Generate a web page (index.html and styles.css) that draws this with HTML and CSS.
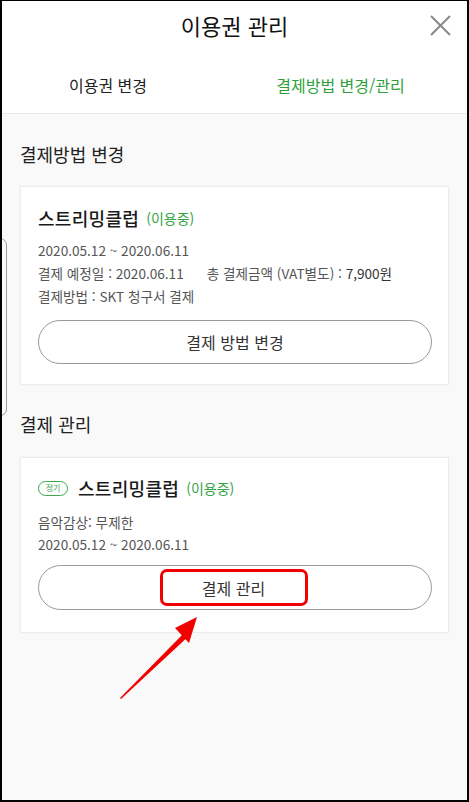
FILE: index.html
```html
<!DOCTYPE html>
<html lang="ko">
<head>
<meta charset="utf-8">
<title>이용권 관리</title>
<link rel="stylesheet" href="styles.css">
</head>
<body>
<div class="frame">
  <header class="header">
    <span></span>
    <h1 class="title">이용권 관리</h1>
    <button class="close" aria-label="닫기">
      <svg width="21" height="21" viewBox="0 0 21 21"><path d="M1 1 L20 20 M20 1 L1 20" stroke="#888" stroke-width="2" fill="none"/></svg>
    </button>
  </header>
  <nav class="tabs">
    <div class="tab">이용권 변경</div>
    <div class="tab active">결제방법 변경/관리</div>
  </nav>
  <main class="content">
    <h2 class="sec-title first">결제방법 변경</h2>
    <section class="card one">
      <div class="card-title"><span class="name">스트리밍클럽</span> <span class="status">(이용중)</span></div>
      <div class="info">
        <p>2020.05.12 ~ 2020.06.11</p>
        <p>결제 예정일 : 2020.06.11<span class="sp"></span>총 결제금액 (VAT별도) : <span class="price">7,900원</span></p>
        <p>결제방법 : SKT 청구서 결제</p>
      </div>
      <button class="pill">결제 방법 변경</button>
    </section>
    <h2 class="sec-title second">결제 관리</h2>
    <section class="card two">
      <div class="card-title"><span class="badge">정기</span><span class="name">스트리밍클럽</span> <span class="status">(이용중)</span></div>
      <div class="info">
        <p>음악감상: 무제한</p>
        <p>2020.05.12 ~ 2020.06.11</p>
      </div>
      <button class="pill tall"><span class="highlight">결제 관리</span></button>
    </section>
  </main>
  <div class="edge"></div>
  <svg class="arrow" width="469" height="802" viewBox="0 0 469 802">
    <polygon points="120,698 187,630 191,634 121,699" fill="#f20000"/>
    <polygon points="197,617 175,628 189,643" fill="#f20000"/>
  </svg>
</div>
</body>
</html>
```
FILE: styles.css
```css
* { box-sizing: border-box; }
html, body { margin: 0; padding: 0; }
body {
  background: #000;
  font-family: "Noto Sans CJK KR", "Noto Sans", sans-serif;
  color: #222;
}
.frame {
  position: relative;
  width: 469px;
  height: 802px;
  border: 2px solid #000;
  border-top-width: 1px;
  background: #f9f9f9;
  overflow: hidden;
}
.header {
  display: grid;
  grid-template-columns: 1fr auto 1fr;
  align-items: center;
  height: 48px;
  background: #fff;
}
.title {
  margin: 0;
  font-size: 22px;
  font-weight: 400;
  line-height: 30px;
  color: #111;
}
.close {
  justify-self: end;
  margin-right: 16px;
  padding: 0;
  border: 0;
  background: none;
  width: 21px;
  height: 21px;
  display: flex;
}
.tabs {
  display: grid;
  grid-template-columns: 212px 1fr;
  height: 65px;
  padding-top: 24px;
  background: #fff;
  border-bottom: 1px solid #e8e8e8;
}
.tab {
  text-align: center;
  font-size: 16px;
  line-height: 24px;
  color: #222;
}
.tab.active { color: #2f9f3c; }
.content { padding: 0 18px; }
.sec-title {
  margin: 0;
  font-size: 18px;
  font-weight: 400;
  line-height: 26px;
  color: #222;
}
.sec-title.first { padding-top: 27px; }
.sec-title.second { margin-top: 26px; }
.card {
  background: #fff;
  border: 1px solid #ececec;
  box-shadow: 0 0 2px rgba(0,0,0,0.04);
  padding: 18px 16px 20px 17px;
}
.card.one { margin-top: 19px; }
.card.two { margin-top: 20px; padding-top: 17px; padding-bottom: 22px; }
.card-title {
  display: flex;
  align-items: center;
  line-height: 26px;
  height: 26px;
}
.name { font-size: 18px; font-weight: 500; color: #1a1a1a; letter-spacing: 0.3px; }
.status { font-size: 14px; color: #36a445; margin-left: 7px; }
.badge {
  display: inline-flex;
  align-items: center;
  justify-content: center;
  width: 30px;
  height: 15px;
  border: 1px solid #3aa84a;
  border-radius: 8px;
  font-size: 8px;
  line-height: 1;
  color: #3aa84a;
  margin-right: 10px;
}
.info { margin-top: 8px; }
.card.two .info { margin-top: 10px; }
.info p {
  margin: 0;
  font-size: 13.6px;
  line-height: 23px;
  color: #555;
}
.card.two .info p { line-height: 22px; }
.sp { display: inline-block; width: 23px; }
.price { color: #333; }
.pill {
  display: flex;
  align-items: center;
  justify-content: center;
  width: 100%;
  height: 44px;
  margin-top: 12px;
  border: 1px solid #9a9a9a;
  border-radius: 22px;
  background: #fff;
  font-family: inherit;
  font-size: 16px;
  color: #333;
  padding: 0;
}
.pill.tall { height: 45px; margin-top: 10px; border-radius: 23px; }
.highlight {
  display: flex;
  align-items: center;
  justify-content: center;
  width: 148px;
  height: 37px;
  border: 3.5px solid #f00000;
  border-radius: 7px;
  margin-left: -3px;
}
.edge {
  position: absolute;
  left: -12px;
  top: 237px;
  width: 17px;
  height: 178px;
  border: 1px solid #9a9a9a;
  border-radius: 7px;
}
.arrow {
  position: absolute;
  left: -2px;
  top: -1px;
  pointer-events: none;
}
```
